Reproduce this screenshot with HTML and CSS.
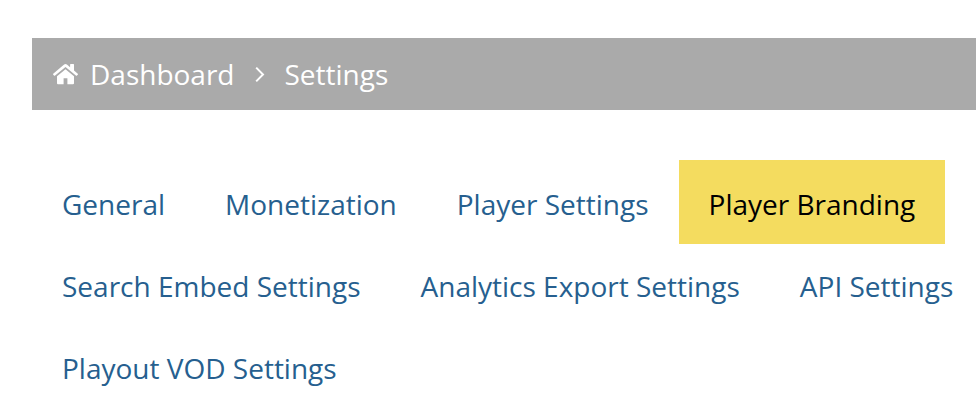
FILE: index.html
```html
<!DOCTYPE html>
<html lang="en">
  <head>
    <meta charset="UTF-8" />
    <meta name="viewport" content="width=device-width, initial-scale=1.0" />
    <title>Settings</title>
    <link rel="stylesheet" href="styles.css">
  </head>
  <body>
    <nav class="breadcrumb" aria-label="Breadcrumb">
      <svg class="home-icon" viewBox="0 0 26 22" aria-hidden="true">
        <path d="M13.5 6.2 5 13.2V20.2q0 1 1 1H11.6v-6h3.8v6H21q1 0 1-1V13.2z" />
        <path d="M25.8 10.8 22 7.6V1.5q0-.6-.6-.6h-2.7q-.6 0-.6.6v2.8L14.9 1.6q-1.4-1-2.8 0L1.2 10.8q-.4.4-.1.8l.9 1q.4.4.8.1L13.5 3.9l10.7 8.8q.5.3.8-.1l.9-1q.3-.4-.1-.8z" />
      </svg>
      <a href="#">Dashboard</a>
      <svg class="chevron" viewBox="0 0 10 18" aria-hidden="true">
        <path d="M1.2 2.6 8 9.5l-6.8 6.9" />
      </svg>
      <span>Settings</span>
    </nav>
    <nav class="tabs" aria-label="Settings sections">
      <a class="tab" href="#">General</a>
      <a class="tab" href="#">Monetization</a>
      <a class="tab" href="#">Player Settings</a>
      <a class="tab active" href="#" aria-current="page">Player Branding</a>
      <a class="tab" href="#">Search Embed Settings</a>
      <a class="tab" href="#">Analytics Export Settings</a>
      <a class="tab" href="#">API Settings</a>
      <a class="tab" href="#">Playout VOD Settings</a>
    </nav>
  </body>
</html>
```
FILE: styles.css
```css
body {
  margin: 0;
  padding: 38px 0 0 32px;
  overflow-x: hidden;
  background: #fff;
  font-family: "Open Sans", sans-serif;
  font-size: 28px;
  line-height: 40px;
}
.breadcrumb {
  display: flex;
  align-items: center;
  padding: 16px 20px;
  background: #aaa;
  color: #fff;
}
.breadcrumb a {
  color: #fff;
  text-decoration: none;
}
.home-icon {
  width: 26px;
  height: 22px;
  margin-right: 12px;
  fill: #fff;
}
.chevron {
  width: 10px;
  height: 18px;
  margin: 0 20px;
  fill: none;
  stroke: #fff;
  stroke-width: 2;
}
/* the last tab's padding may run past the window edge */
.tabs {
  display: flex;
  flex-wrap: wrap;
  margin: 50px -30px 0 0;
}
.tab {
  margin-bottom: -2px;
  padding: 24px 30px 20px;
  color: #265f8f;
  text-decoration: none;
  white-space: nowrap;
}
.tab.active {
  background: #f4dc5f;
  color: #000;
}
```
